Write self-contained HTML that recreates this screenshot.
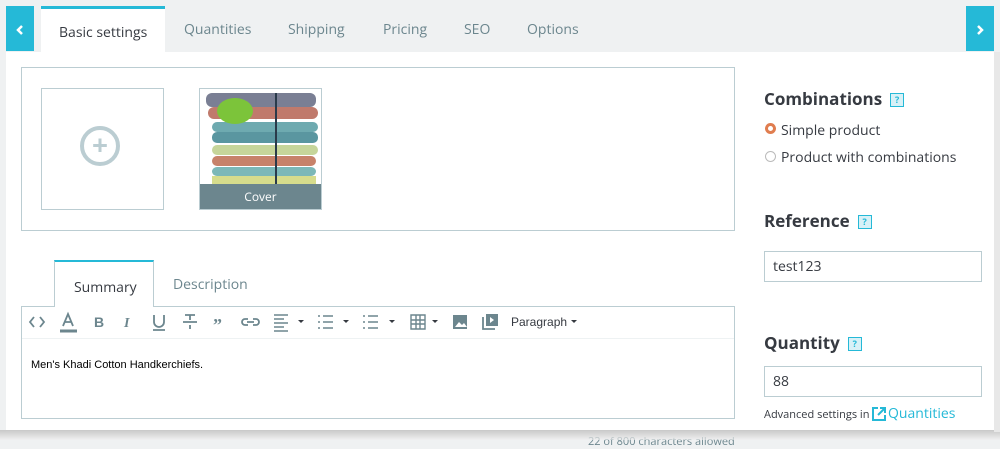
<!DOCTYPE html>
<html><head><style>
body{margin:0;width:1000px;height:440px;overflow:hidden;background:#eff1f2;font-family:"Open Sans","Liberation Sans",sans-serif;position:relative}
.a{position:absolute}
.tab{position:absolute;top:20px;font-size:14px;color:#6c868e}
.help{display:inline-block;width:12px;height:12px;border:1.5px solid #25b9d7;background:#d8f1f7;color:#25b9d7;font-size:9px;line-height:12px;text-align:center;vertical-align:middle;margin-left:8px;font-weight:bold}
h3{position:absolute;margin:0;font-size:17px;font-weight:bold;color:#363a41}
.inp{position:absolute;left:764px;width:218px;height:31px;border:1px solid #bbcdd2;background:#fff;box-sizing:border-box;font-size:14px;color:#363a41;padding-left:8px;line-height:29px}
</style></head><body>
<div class="a" style="left:6px;top:52px;width:988px;height:380px;background:#fff"></div>
<div class="a" style="left:588px;top:434px;font-size:11px;color:#6c868e">22 of 800 characters allowed</div>
<div class="a" style="left:0;top:430px;width:1000px;height:10px;background:linear-gradient(#c8c8c8,rgba(240,240,240,0.6))"></div>
<div class="a" style="left:994px;top:52px;width:6px;height:380px;background:#e8e8e8"></div>
<div class="a" style="left:6px;top:6px;width:28px;height:45px;background:#25b9d7"><svg width="28" height="45"><path d="M16 24l-4 4 4 4" transform="translate(0,-4)" stroke="#fff" stroke-width="2.5" fill="none"/></svg></div>
<div class="a" style="left:966px;top:6px;width:28px;height:45px;background:#25b9d7"><svg width="28" height="45"><path d="M12 20l4 4-4 4" stroke="#fff" stroke-width="2.5" fill="none"/></svg></div>
<div class="a" style="left:41px;top:6px;width:124px;height:46px;background:#fff;border-top:3px solid #25b9d7;box-sizing:border-box"></div>
<div class="tab" style="left:59px;top:23px;color:#363a41">Basic settings</div>
<div class="tab" style="left:184px">Quantities</div>
<div class="tab" style="left:288px">Shipping</div>
<div class="tab" style="left:383px">Pricing</div>
<div class="tab" style="left:464px">SEO</div>
<div class="tab" style="left:527px">Options</div>

<div class="a" style="left:21px;top:67px;width:714px;height:164px;border:1px solid #bbcdd2;box-sizing:border-box"></div>
<div class="a" style="left:41px;top:88px;width:123px;height:122px;border:1px solid #bbcdd2;box-sizing:border-box"></div>
<div class="a" style="left:80px;top:126px;width:40px;height:40px;border:4px solid #bbcdd2;border-radius:50%;box-sizing:border-box;color:#bbcdd2;font-size:28px;line-height:30px;text-align:center;font-weight:bold">+</div>
<div class="a" style="left:199px;top:88px;width:123px;height:122px;border:1px solid #bbcdd2;box-sizing:border-box;overflow:hidden;background:#fff">
<svg width="123" height="96" style="position:absolute;left:0;top:0">
<rect x="6" y="4" width="110" height="14" rx="6" fill="#7a7f94"/>
<rect x="8" y="18" width="110" height="12" rx="6" fill="#c07a6c"/>
<rect x="12" y="33" width="106" height="10" rx="5" fill="#6eaab0"/>
<rect x="12" y="43" width="106" height="11" rx="5" fill="#5a96a0"/>
<rect x="12" y="56" width="106" height="10" rx="5" fill="#c6d59a"/>
<rect x="12" y="67" width="104" height="10" rx="5" fill="#c7826a"/>
<rect x="12" y="78" width="104" height="9" rx="5" fill="#7cb8b8"/>
<rect x="12" y="87" width="104" height="9" fill="#d6dc8c"/>
<rect x="75" y="4" width="2" height="92" fill="#2a3a4a"/>
<ellipse cx="35" cy="22" rx="18" ry="13" fill="#7cc43a"/>
</svg>
<div class="a" style="left:0;top:95px;width:121px;height:26px;background:#6c868e;color:#fff;font-size:12px;text-align:center;line-height:26px">Cover</div>
</div>

<div class="a" style="left:54px;top:260px;width:100px;height:47px;background:#fff;border:1px solid #bbcdd2;border-bottom:none;border-top:2px solid #25b9d7;box-sizing:border-box;z-index:2"></div>
<div class="a" style="left:74px;top:278px;font-size:14px;color:#363a41;z-index:3">Summary</div>
<div class="a" style="left:173px;top:275px;font-size:14px;color:#6c868e">Description</div>
<div class="a" style="left:21px;top:306px;width:714px;height:113px;border:1px solid #bbcdd2;box-sizing:border-box"></div>
<div class="a" style="left:22px;top:338px;width:712px;height:1px;background:#eef2f3"></div>
<svg class="a" style="left:22px;top:310px" width="580" height="24" fill="none" stroke="#6c868e" stroke-width="1.8">
<path d="M12 7l-4 5 4 5M18 7l4 5-4 5"/>
<path d="M41 16l5-12 5 12M43 12h6"/><path d="M38 21h17" stroke-width="3"/>
<text x="72" y="17" fill="#6c868e" stroke="none" font-size="14" font-weight="bold" font-family="Liberation Sans">B</text>
<text x="102" y="17" fill="#6c868e" stroke="none" font-size="14" font-style="italic" font-weight="bold" font-family="Liberation Serif">I</text>
<path d="M132 5v7a5 5 0 0 0 10 0v-7M131 20h12"/>
<path d="M161 12h14M163 5h10M168 5v5M168 15v4"/>
<text x="191" y="21" fill="#6c868e" stroke="none" font-size="18" font-weight="bold" font-family="Liberation Serif">”</text>
<path d="M226 9h-3a3 3 0 0 0 0 6h3M231 9h3a3 3 0 0 1 0 6h-3M225 12h7"/>
<path d="M252 5h14M252 9h10M252 13h14M252 17h10M252 21h14" stroke-width="1.5"/>
<path d="M276 10l3 3 3-3z" fill="#363a41" stroke="none"/>
<path d="M296 6h2M301 6h10M296 12h2M301 12h10M296 18h2M301 18h10" stroke-width="1.6"/>
<path d="M321 10l3 3 3-3z" fill="#363a41" stroke="none"/>
<path d="M341 6h2M346 6h10M341 12h2M346 12h10M341 18h2M346 18h10" stroke-width="1.6"/>
<path d="M367 10l3 3 3-3z" fill="#363a41" stroke="none"/>
<path d="M389 5h14v14h-14zM389 10h14M389 14h14M394 5v14M398 5v14" stroke-width="1.4"/>
<path d="M410 10l3 3 3-3z" fill="#363a41" stroke="none"/>
<rect x="431" y="5" width="14" height="14" fill="#6c868e" stroke="none"/>
<path d="M433 17l4-5 3 3 2-2 3 4z" fill="#fff" stroke="none"/>
<rect x="464" y="4" width="12" height="12" fill="#6c868e" stroke="none"/>
<path d="M461 7v12h12"/><path d="M468 7l4 3-4 3z" fill="#fff" stroke="none"/>
<text x="489" y="16" fill="#363a41" stroke="none" font-size="12" font-family="Liberation Sans">Paragraph</text>
<path d="M549 10l3 3 3-3z" fill="#363a41" stroke="none"/>
</svg>
<div class="a" style="left:31px;top:359px;font-size:11px;font-family:'Liberation Sans';color:#000">Men's Khadi Cotton Handkerchiefs.</div>

<h3 style="left:764px;top:87px">Combinations<span class="help">?</span></h3>
<div class="a" style="left:765px;top:123px;width:11px;height:11px;border-radius:50%;background:#fff;border:3px solid #e07d4f;box-sizing:border-box"></div>
<div class="a" style="left:781px;top:121px;font-size:14px;color:#363a41">Simple product</div>
<div class="a" style="left:765px;top:151px;width:11px;height:11px;border-radius:50%;border:1px solid #bbb;box-sizing:border-box"></div>
<div class="a" style="left:781px;top:148px;font-size:14px;color:#363a41">Product with combinations</div>
<h3 style="left:764px;top:209px">Reference<span class="help">?</span></h3>
<div class="inp" style="top:251px">test123</div>
<h3 style="left:764px;top:331px">Quantity<span class="help">?</span></h3>
<div class="inp" style="top:366px">88</div>
<div class="a" style="left:764px;top:407px;font-size:11px;color:#363a41">Advanced settings in</div>
<svg class="a" style="left:871px;top:406px" width="16" height="16" fill="none" stroke="#25b9d7" stroke-width="2"><path d="M7 2H2v12h12V9M9 2h5v5M14 2L7 9"/></svg>
<div class="a" style="left:888px;top:404px;font-size:14px;color:#25b9d7">Quantities</div>
</body></html>
